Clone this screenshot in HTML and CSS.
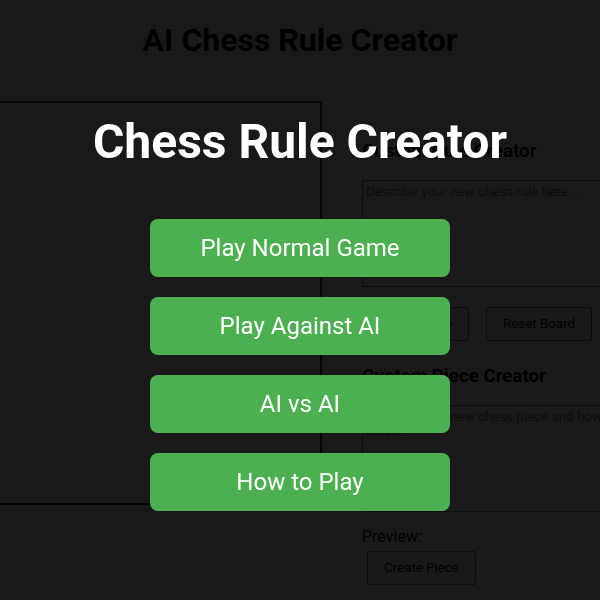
FILE: index.html
```html
<!DOCTYPE html>
<html lang="en">
<head>
<meta charset="utf-8">
<title>AI Chess Rule Creator</title>
<link rel="stylesheet" href="styles.css">
</head>
<body>
  <h1 class="page-title">AI Chess Rule Creator</h1>
  <div class="main">
    <div class="board"></div>
    <div class="panel">
      <h3 class="panel-heading">Custom Rule Creator</h3>
      <textarea class="field" placeholder="Describe your new chess rule here..."></textarea>
      <div class="actions">
        <button class="btn">Create Rule</button>
        <button class="btn">Reset Board</button>
      </div>
      <h3 class="panel-heading">Custom Piece Creator</h3>
      <textarea class="field" placeholder="Describe your new chess piece and how it moves..."></textarea>
      <div class="preview-label">Preview:</div>
      <div class="preview"></div>
      <button class="btn">Create Piece</button>
    </div>
  </div>

  <div class="overlay">
    <h1 class="menu-title">Chess Rule Creator</h1>
    <div class="menu">
      <button class="menu-btn">Play Normal Game</button>
      <button class="menu-btn">Play Against AI</button>
      <button class="menu-btn">AI vs AI</button>
      <button class="menu-btn">How to Play</button>
    </div>
  </div>
</body>
</html>
```

FILE: styles.css
```css
html, body {
  margin: 0;
  padding: 0;
  overflow: hidden;
  height: 100%;
}

body {
  font-family: Roboto, "Liberation Sans", Arial, sans-serif;
  background: #ffffff;
  color: #000000;
}

.page-title {
  text-align: center;
  font-size: 32px;
  margin: 21.44px 0;
}

.main {
  display: flex;
  justify-content: center;
  align-items: flex-start;
  gap: 20px;
  padding: 20px 0;
}

.board {
  flex: none;
  width: 400px;
  height: 400px;
  border: 2px solid #333333;
  background: #ffffff;
}

.panel {
  flex: none;
  width: 300px;
  padding: 20px;
}

.panel-heading {
  font-size: 18.72px;
  margin: 18.72px 0;
}

.field {
  display: block;
  box-sizing: content-box;
  width: 294px;
  height: 99px;
  padding: 3px;
  border: 1px solid #767676;
  font-family: inherit;
  font-size: 13.33px;
  margin: 0 0 14.5px 0;
  resize: none;
}

.actions {
  display: flex;
  gap: 7px;
}

.btn {
  font-family: inherit;
  font-size: 13.33px;
  padding: 8.5px 16px;
  margin: 5px;
  background: #efefef;
  border: 1px solid #767676;
  border-radius: 2px;
  color: #000000;
}

.preview-label {
  font-size: 16px;
}

.overlay {
  position: fixed;
  inset: 0;
  background: rgba(0, 0, 0, 0.9);
  display: flex;
  flex-direction: column;
  align-items: center;
  justify-content: center;
  padding-top: 23px;
  box-sizing: border-box;
}

.menu-title {
  color: #ffffff;
  font-size: 48px;
  margin: 0 0 49px 0;
}

.menu {
  display: flex;
  flex-direction: column;
  gap: 20px;
}

.menu-btn {
  width: 300px;
  padding: 15px;
  font-family: inherit;
  font-size: 24px;
  color: #ffffff;
  background: #4caf50;
  border: none;
  border-radius: 8px;
}
```
